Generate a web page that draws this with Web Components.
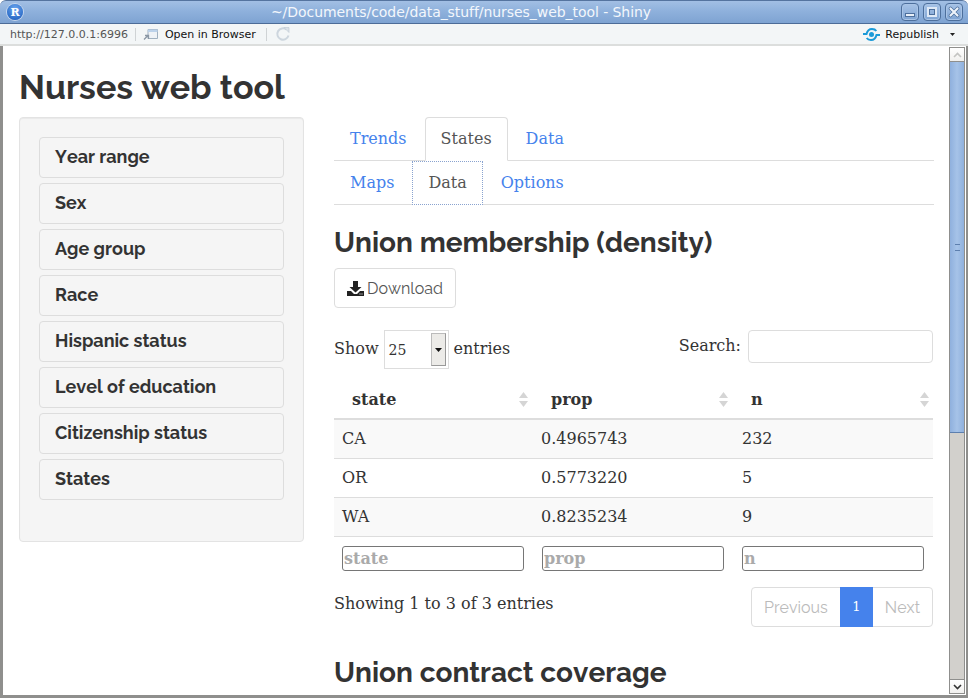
<!DOCTYPE html>
<html><head><meta charset="utf-8"><title>Nurses web tool</title>
<style>html,body{margin:0;padding:0;height:100%;overflow:hidden;background:#fff}</style></head>
<body>
<app-window>
  <title-bar slot="title">~/Documents/code/data_stuff/nurses_web_tool - Shiny</title-bar>
  <tool-bar slot="tools"></tool-bar>
  <shiny-page>
    <h-title slot="head">Nurses web tool</h-title>
    <side-panel slot="side">
      <acc-item>Year range</acc-item><acc-item>Sex</acc-item><acc-item>Age group</acc-item><acc-item>Race</acc-item>
      <acc-item>Hispanic status</acc-item><acc-item>Level of education</acc-item><acc-item>Citizenship status</acc-item><acc-item>States</acc-item>
    </side-panel>
    <nav-tabs items="Trends|States|Data" active="1"></nav-tabs>
    <nav-tabs items="Maps|Data|Options" active="1" focus></nav-tabs>
    <section-head>Union membership (density)</section-head>
    <dl-button>Download</dl-button>
    <dt-table></dt-table>
    <section-head class="second">Union contract coverage</section-head>
  </shiny-page>
  <win-scrollbar slot="scroll"></win-scrollbar>
</app-window>
<script>
const def=(name,html,extra)=>{customElements.define(name,class extends HTMLElement{
  constructor(){super();this.attachShadow({mode:'open'}).innerHTML=html;}
  connectedCallback(){extra&&extra.call(this,this.shadowRoot);}
});};
const RW='Raleway,Lato,"Liberation Sans",sans-serif';
const SERIF='"DejaVu Serif",serif';

def('app-window',`<style>
:host{display:flex;flex-direction:column;width:968px;height:698px;overflow:hidden;background:#fff;box-sizing:border-box}
.body{flex:1;min-height:0;display:flex;border-left:3px solid #8f8f8d;border-right:2px solid #8f8f8d;border-bottom:3px solid #8f8f8d;background:#fff}
.page{flex:1;min-width:0;overflow:hidden;box-sizing:border-box}
</style><slot name="title"></slot><slot name="tools"></slot>
<div class="body"><div class="page"><slot></slot></div><slot name="scroll"></slot></div>`);

def('title-bar',`<style>
:host{display:flex;align-items:center;height:24px;box-sizing:border-box;background:linear-gradient(#a2bfe4 0,#8fb1dc 45%,#7ea3d2 100%);border-top:1px solid #55749f;border-bottom:1px solid #4c6c98;border-radius:6px 6px 0 0;padding:0 5px 0 7px;color:#fff;font:14px "DejaVu Sans",sans-serif}
.t{flex:1;text-align:center;color:#f3f7fc;padding-right:2px;letter-spacing:-.06px}
.logo{width:16px;height:16px;border-radius:50%;background:radial-gradient(circle at 50% 30%,#6aa6ef,#1658ba);display:flex;align-items:center;justify-content:center;color:#fff;font:bold 11px "DejaVu Serif",serif;box-shadow:0 0 0 1px #c4d6ee}
.btns{display:flex;gap:4px}
.b{width:18px;height:18px;box-sizing:border-box;border:1px solid #4d6f9c;border-radius:4px;background:linear-gradient(#a6c2e6,#7fa4d3);box-shadow:inset 0 0 0 1px #a9c4e6;display:flex;align-items:center;justify-content:center}
</style><div class="logo">R</div><div class="t"><slot></slot></div><div class="btns">
<div class="b"><svg width="12" height="12"><rect x="1.500" y="7.500" width="9" height="3" fill="#e8eff8" stroke="#4d6f9c"/></svg></div>
<div class="b"><svg width="12" height="12"><rect x="2" y="2" width="8" height="8" fill="none" stroke="#dfe9f6" stroke-width="2"/><rect x="3.500" y="3.500" width="5" height="5" fill="none" stroke="#4d6f9c" stroke-width="1"/></svg></div>
<div class="b"><svg width="12" height="12"><path d="M2.500 2.500l7 7M9.500 2.500l-7 7" stroke="#4d6f9c" stroke-width="3.600" stroke-linecap="round"/><path d="M2.500 2.500l7 7M9.500 2.500l-7 7" stroke="#eef3fa" stroke-width="2.200" stroke-linecap="round"/></svg></div>
</div>`);

def('tool-bar',`<style>
:host{display:flex;align-items:center;height:22px;box-sizing:border-box;background:#f3f6f7;border-bottom:2px solid #dcdedd;font:11px "DejaVu Sans",sans-serif;color:#111;padding:0 10px 0 10px}
.url{color:#555}.sep{width:1px;height:13px;background:#cfd3d5;margin:0 7px}
.sp{flex:1}.ic{display:block}
</style><span class="url">http://127.0.0.1:6996</span><span class="sep"></span>
<svg class="ic" width="16" height="14" viewBox="0 0 16 14"><path d="M5 2.500h9.500v9H5z" fill="#eef2f6" stroke="#9fb0c0"/><path d="M5 2.500h9.500v2.500H5z" fill="#bcd2ea"/><path d="M1 12.500l4-4M2 8.500h3.500V12" stroke="#8b98a5" stroke-width="1.300" fill="none"/></svg>
<span style="margin-left:6px">Open in Browser</span><span class="sep" style="margin:0 8px 0 10px"></span>
<svg class="ic" width="16" height="16" viewBox="0 0 16 16"><path d="M13.500 9.500A5.700 5.700 0 1 1 11.500 3.500" fill="none" stroke="#cdd6de" stroke-width="2"/><path d="M9 1.500h5v5z" fill="#dbe2e8" stroke="#bcc7d1" stroke-width=".6"/></svg>
<span class="sp"></span>
<svg class="ic" width="17" height="13" viewBox="0 0 17 13"><path d="M0 6h3.500C4.500 2 7 1 9 1s3.500.8 4.300 2" fill="none" stroke="#1a9ad8" stroke-width="2"/><path d="M17 7h-3.500C12.500 11 10 12 8 12s-3.500-.8-4.300-2" fill="none" stroke="#1a9ad8" stroke-width="2"/><circle cx="8.500" cy="6.500" r="2.500" fill="#1a9ad8"/></svg>
<span style="margin-left:5px">Republish</span>
<svg style="margin-left:11px;margin-right:3px" width="5" height="3"><path d="M0 0h5L2.500 3z" fill="#222"/></svg>`);

def('win-scrollbar',`<style>
:host{display:flex;flex-direction:column;width:16px;box-sizing:border-box;margin:1px 1px 1px 0;background:#d2d0cc;border-left:1px solid #8f8f8d;border-right:1px solid #8f8f8d;flex:none}
.btn{height:15px;flex:none;background:linear-gradient(#fff,#f1f0ee);border:1px solid #8f8f8d;border-width:1px 0;display:flex;align-items:center;justify-content:center;box-sizing:border-box}
.thumb{height:371px;flex:none;background:linear-gradient(90deg,#8fb0dd,#a6c3e8 50%,#8fb0dd);border-bottom:1px solid #5d7fae;box-sizing:border-box;display:flex;align-items:center;justify-content:center}
.sp{flex:1}.g{width:5px;height:5px;border-top:1px solid #5d7fae;border-bottom:1px solid #5d7fae}
</style>
<div class="btn"><svg width="9" height="6"><path d="M1 5l3.500-3.500L8 5" fill="none" stroke="#c4c4c2" stroke-width="1.600"/></svg></div>
<div class="thumb"><div class="g"></div></div><div class="sp"></div>
<div class="btn"><svg width="9" height="6"><path d="M1 1l3.500 3.500L8 1" fill="none" stroke="#333" stroke-width="1.600"/></svg></div>`);

def('shiny-page',`<style>
:host{display:block;padding:0 15px 0 16px;color:#333}
.row{display:flex;gap:30px;align-items:flex-start}
.main{flex:1;min-width:0}
</style><slot name="head"></slot><div class="row"><slot name="side"></slot><div class="main"><slot></slot></div></div>`);

def('h-title',`<style>:host{display:block;font:700 34px/40px ${RW};font-kerning:none;color:#333;padding:21px 0 10px;height:71px;box-sizing:border-box}</style><slot></slot>`);

def('side-panel',`<style>:host{display:flex;flex-direction:column;gap:5px;width:285px;height:425px;flex:none;box-sizing:border-box;padding:19px 19px;background:#f5f5f5;border:1px solid #e3e3e3;border-radius:4px;box-shadow:inset 0 1px 1px rgba(0,0,0,.05)}</style><slot></slot>`);

def('acc-item',`<style>:host{display:block;height:41px;box-sizing:border-box;border:1px solid #ddd;border-radius:4px;background:#f5f5f5;padding:0 15px;font:700 18px/38px ${RW};color:#333;font-kerning:none}</style><slot></slot>`);

def('nav-tabs',`<style>
:host{display:flex;height:44px;box-sizing:border-box;border-bottom:1px solid #ddd;font:16px/22px ${SERIF}}
.t{padding:10px 15px;margin-right:2px;height:44px;box-sizing:border-box;color:#4582ec;border:1px solid transparent;border-radius:4px 4px 0 0}
.t.a{color:#555;background:#fff;border-color:#ddd #ddd transparent}
.t.f{border:1px dotted #8aa3cf;border-radius:0}
</style><div id="r" style="display:contents"></div>`,function(s){
  const a=+this.getAttribute('active'),f=this.hasAttribute('focus');
  s.getElementById('r').innerHTML=this.getAttribute('items').split('|').map((x,i)=>`<div class="t${i==a?' a':''}${i==a&&f?' f':''}">${x}</div>`).join('');
});

def('section-head',`<style>:host{display:block;font:700 28px/30px ${RW};font-kerning:none;color:#333;margin:23px 0 10px}:host(.second){margin:31px 0 0}</style><slot></slot>`);

def('dl-button',`<style>
:host{display:inline-flex;align-items:center;gap:3px;height:40px;width:122px;box-sizing:border-box;padding:0 12px;border:1px solid #ddd;border-radius:4px;background:#fff;font:16px ${RW};font-kerning:none;color:#555}
</style><svg width="17" height="16" viewBox="0 0 17 16"><path d="M6 1h5v6h3.500L8.500 12.500 2.500 7H6z" fill="#222"/><path d="M0 11h4l3 3h3l3-3h4v5H0z" fill="#222"/><path d="M12.500 14h1M14.500 14h1" stroke="#fff"/></svg><slot></slot>`);

def('dt-table',`<style>
:host{display:block;font:16px/22px ${SERIF};color:#333;margin-top:22px}
.top{display:flex;justify-content:space-between;align-items:flex-start;height:51px}
.len{display:flex;align-items:center;gap:5px;height:37px}
.sel{display:flex;width:65px;height:39px;margin-top:2px;box-sizing:border-box;border:1px solid #ddd;align-items:center;justify-content:space-between;font-size:14px;padding-left:4px}
.arrow{width:15px;height:33px;background:#ecebe8;border:1px solid #bbb;border-right-color:#999;border-bottom-color:#999;margin-right:2px;display:flex;align-items:center;justify-content:center;box-sizing:border-box}
.srch{display:flex;align-items:flex-start;gap:7px;padding-right:1px;height:33px;line-height:32px}
.box{width:185px;height:33px;box-sizing:border-box;border:1px solid #ddd;border-radius:4px;background:#fff}
.grid{display:grid;grid-template-columns:199px 201px 199px;width:599px}
.th{height:39px;box-sizing:border-box;font-weight:700;padding:8px 5px 8px 18px;display:flex;justify-content:space-between;align-items:center;border-bottom:2px solid #ddd}
.th.c1{padding-right:6px}.th.c2{padding-left:17px;padding-right:4px}
.td{height:39px;box-sizing:border-box;padding:8px;border-bottom:1px solid #ddd}
.odd{background:#f9f9f9}
.ft{height:50px;padding:9px 8px 0;box-sizing:border-box}
.ft.c1{padding-left:9px}
.ft div{width:182px;height:25px;box-sizing:border-box;border:1px solid #767676;border-radius:3px;background:#fff;font-weight:700;color:#aaa;line-height:23px;padding-left:1px}
.bot{display:flex;justify-content:space-between;align-items:flex-start;padding-right:1px}
.info{padding-top:6px}
.pg{display:flex;height:40px;width:182px;box-sizing:border-box;border:1px solid #ddd;border-radius:4px;font:16px/40px ${RW};font-kerning:none;color:#bbb}
.pg span{padding:0 12px}.pg .on{background:#4582ec;color:#fff;font:13px/40px ${SERIF};margin:-1px 0;padding:0;width:33px;text-align:center}
.pg .prev{flex:none;width:88px;box-sizing:border-box}
</style>
<div class="top"><div class="len">Show <div class="sel">25<span class="arrow"><svg width="7" height="4"><path d="M0 0h7L3.500 4z" fill="#111"/></svg></span></div> entries</div>
<div class="srch">Search: <div class="box"></div></div></div>
<div class="grid" id="g"></div>
<div class="bot"><div class="info">Showing 1 to 3 of 3 entries</div><div class="pg"><span class="prev">Previous</span><span class="on">1</span><span>Next</span></div></div>`,function(s){
  const sort='<svg width="9" height="15" viewBox="0 0 9 15"><path d="M4.500 0L9 6H0z" fill="#d5d5d5"/><path d="M4.500 15L9 9H0z" fill="#d5d5d5"/></svg>';
  const rows=[['CA','0.4965743','232'],['OR','0.5773220','5'],['WA','0.8235234','9']];
  s.getElementById('g').innerHTML=['state','prop','n'].map((h,i)=>`<div class="th c${i}">${h}${sort}</div>`).join('')+
   rows.map((r,i)=>r.map((c,j)=>`<div class="td c${j}${i%2?'':' odd'}">${c}</div>`).join('')).join('')+
   ['state','prop','n'].map((h,i)=>`<div class="ft c${i}"><div>${h}</div></div>`).join('');
});
</script>
</body></html>
